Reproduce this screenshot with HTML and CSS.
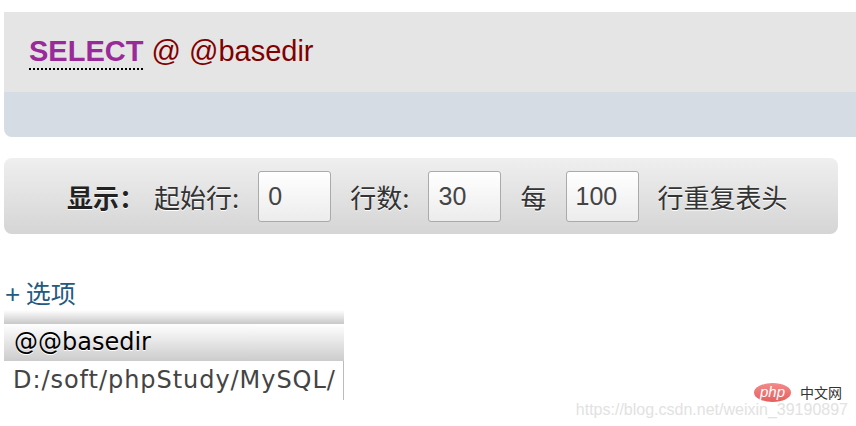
FILE: index.html
```html
<!DOCTYPE html>
<html>
<head>
<meta charset="utf-8">
<link rel="stylesheet" href="styles.css">
</head>
<body>
<div class="sqlpanel">
  <div class="sqlquery"><a class="kw" href="#">SELECT</a> <span class="var">@ @basedir</span></div>
  <div class="sqlfoot"></div>
</div>

<div class="toolbar">
  <span class="lbl strong">显示：</span>
  <span class="lbl">起始行:</span>
  <span class="field">0</span>
  <span class="lbl">行数:</span>
  <span class="field">30</span>
  <span class="lbl">每</span>
  <span class="field">100</span>
  <span class="lbl">行重复表头</span>
</div>

<div class="options"><span class="plus">+</span> 选项</div>

<div class="result">
  <div class="head-top"></div>
  <div class="head-cell">@@basedir</div>
  <div class="data-cell">D:/soft/phpStudy/MySQL/</div>
</div>

<div class="watermark">
  <div class="brand"><span class="php">php</span><span class="cn">中文网</span></div>
  <div class="url">https://blog.csdn.net/weixin_39190897</div>
</div>
</body>
</html>
```

FILE: styles.css
```css
html, body {
  margin: 0;
  padding: 0;
  background: #fff;
}
body {
  position: relative;
  width: 856px;
  height: 426px;
  overflow: hidden;
  font-family: "Liberation Sans", Arial, sans-serif;
}

.sqlpanel {
  margin: 12px 0 0 4px;
  border-radius: 0 0 0 8px;
  overflow: hidden;
  background: #d5dce3;
}
.sqlquery {
  height: 80px;
  box-sizing: border-box;
  background: #e5e5e5;
  padding: 22px 0 0 25px;
  font-size: 29px;
  line-height: 35px;
  color: #800000;
}
.kw {
  color: #9a2a9a;
  font-weight: bold;
  text-decoration: none;
  border-bottom: 2px dotted #000;
  padding-bottom: 1px;
}
.var {
  color: #800000;
}
.sqlfoot {
  height: 45px;
}

.toolbar {
  margin: 21px 0 0 4px;
  width: 834px;
  height: 76px;
  box-sizing: border-box;
  border-radius: 8px;
  background: linear-gradient(#efefef, #d5d5d5);
  display: flex;
  align-items: center;
  gap: 19px;
  padding-left: 63px;
  font-family: "Noto Sans CJK SC", "Liberation Sans", sans-serif;
  font-size: 26px;
  color: #333;
  text-shadow: 0 1px 0 #fff;
}
.lbl {
  white-space: nowrap;
}
.strong {
  font-weight: bold;
  color: #222;
  margin-right: -10px;
}
.field {
  width: 73px;
  height: 51px;
  box-sizing: border-box;
  border: 1px solid #aaa;
  border-radius: 3px;
  background: linear-gradient(#ffffff, #ececec);
  font-family: "Liberation Sans", Arial, sans-serif;
  font-size: 25px;
  line-height: 49px;
  padding-left: 9px;
  color: #444;
  text-shadow: none;
}

.options {
  margin: 43px 0 0 5px;
  font-family: "Noto Sans CJK SC", "Liberation Sans", sans-serif;
  font-size: 25px;
  line-height: 30px;
  color: #235a81;
}
.plus {
  font-family: "Liberation Sans", Arial, sans-serif;
  font-size: 26px;
}

.result {
  margin: 1px 0 0 4px;
  width: 340px;
  font-family: "DejaVu Sans", sans-serif;
}
.head-top {
  height: 14px;
  background: linear-gradient(#ffffff, #c8c8c8);
}
.head-cell {
  height: 37px;
  box-sizing: border-box;
  background: linear-gradient(#ffffff, #cccccc);
  padding-left: 10px;
  font-size: 24px;
  line-height: 37px;
  color: #000;
  text-shadow: 0 1px 0 #fff;
}
.data-cell {
  height: 39px;
  box-sizing: border-box;
  border-right: 1px solid #bbb;
  padding-left: 9px;
  font-size: 24px;
  letter-spacing: 0.95px;
  line-height: 39px;
  color: #444;
  white-space: nowrap;
}

.watermark {
  position: absolute;
  right: 8px;
  top: 382px;
  text-align: right;
}
.brand {
  display: flex;
  justify-content: flex-end;
  align-items: center;
  gap: 9px;
  height: 20px;
  margin-right: 6px;
}
.php {
  display: inline-block;
  width: 37px;
  height: 19px;
  border-radius: 50%;
  background: linear-gradient(#f28b8b, #e85e5e);
  color: #fff;
  font-family: "Liberation Sans", Arial, sans-serif;
  font-style: italic;
  font-size: 15px;
  line-height: 18px;
  text-align: center;
}
.cn {
  font-family: "Noto Sans CJK SC", sans-serif;
  font-size: 14px;
  color: #333;
}
.url {
  font-family: "Liberation Sans", Arial, sans-serif;
  font-size: 16px;
  line-height: 16px;
  color: #e2e2e2;
  margin-top: 0;
}
```
